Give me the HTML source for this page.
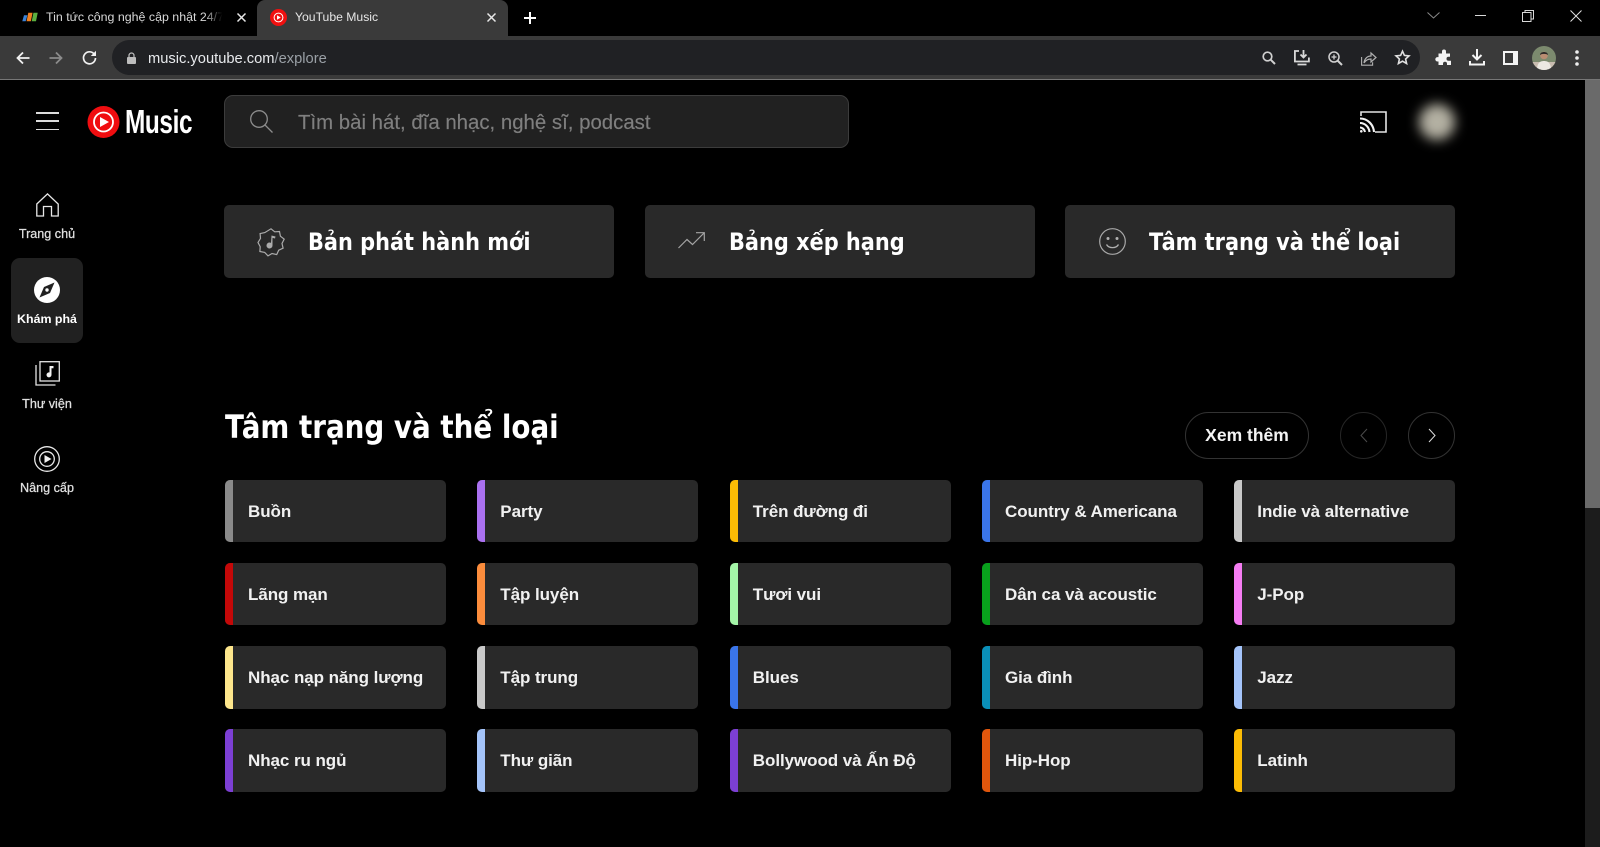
<!DOCTYPE html>
<html lang="vi"><head><meta charset="utf-8"><title>YouTube Music</title>
<style>
*{box-sizing:border-box}
html,body{margin:0;width:1600px;height:847px;overflow:hidden;background:#000;color:#fff;font-family:"Liberation Sans","Noto Sans CJK SC",sans-serif}
.a{position:absolute}
svg{position:absolute;overflow:visible}
.t{position:absolute;white-space:nowrap;line-height:1}
.card{position:absolute;top:205px;width:389.5px;height:73px;background:#292929;border-radius:5px}
.card .t{top:25px;font-family:"DejaVu Sans",sans-serif;font-weight:700;font-size:24px;color:#fff;transform:scaleX(.87);transform-origin:0 50%}
.g{position:absolute;width:221px;height:62.5px;background:#292929;border-radius:5px;overflow:hidden}
.g i{position:absolute;left:0;top:0;bottom:0;width:8px}
.g span{position:absolute;left:23px;top:23px;line-height:18px;font-size:17px;letter-spacing:-.07px;font-weight:700;color:#f1f1f1;white-space:nowrap}
.nav{position:absolute;left:0;width:94px;text-align:center;font-size:12.6px;line-height:14px;color:#e0e0e0;font-weight:400;-webkit-text-stroke:.25px #e0e0e0}
</style></head><body>
<!-- tab strip -->
<div class="a" style="left:0;top:0;width:1600px;height:36px;background:#000"></div>
<div class="a" style="left:257px;top:0;width:251px;height:36px;background:#3a3a3a;border-radius:8px 8px 0 0"></div>
<svg style="left:21px;top:11px" width="18" height="12" viewBox="0 0 20 14"><path d="M3 5h4l-2 7H1z" fill="#3b82d6"/><path d="M8 2h5l-2 10H6z" fill="#f08020"/><path d="M14 2h5l-2 10h-5z" fill="#5cb040"/></svg>
<div class="t" style="left:46px;top:10px;font-size:12.4px;line-height:15px;color:#d8d8d8;width:180px;overflow:hidden;-webkit-mask-image:linear-gradient(90deg,#000 88%,transparent 98%)">Tin tức công nghệ cập nhật 24/7</div>
<svg style="left:237px;top:13px" width="9" height="9"><path d="M.5.5l8 8M8.500.5l-8 8" stroke="#e8e8e8" stroke-width="1.500"/></svg>
<svg style="left:270px;top:9px" width="17" height="17" viewBox="0 0 17 17"><circle cx="8.500" cy="8.500" r="8.500" fill="#f01010"/><circle cx="8.500" cy="8.500" r="4.400" fill="none" stroke="#fff" stroke-width="1"/><path d="M7 6.200l3.800 2.300L7 10.800z" fill="#fff"/></svg>
<div class="t" style="left:295px;top:10px;font-size:12.200px;line-height:15px;color:#e6e6e6">YouTube Music</div>
<svg style="left:487px;top:13px" width="9" height="9"><path d="M.5.5l8 8M8.500.5l-8 8" stroke="#e8e8e8" stroke-width="1.500"/></svg>
<svg style="left:524px;top:12px" width="12" height="12"><path d="M6 0v12M0 6h12" stroke="#fff" stroke-width="2"/></svg>
<svg style="left:1427px;top:12px" width="13" height="7"><path d="M.5.500l6 5.500 6-5.500" fill="none" stroke="#8a8a8a" stroke-width="1"/></svg>
<div class="a" style="left:1475px;top:15px;width:11px;height:1px;background:#d8d8d8"></div>
<svg style="left:1522px;top:10px" width="12" height="12"><path d="M.5 2.500h8.500v9H.5zM3 2.500V.5h8.500v8.500H9" fill="none" stroke="#d8d8d8" stroke-width="1"/></svg>
<svg style="left:1570px;top:10px" width="12" height="12"><path d="M.5.5l11 11M11.500.5l-11 11" stroke="#e0e0e0" stroke-width="1"/></svg>
<!-- toolbar -->
<div class="a" style="left:0;top:36px;width:1600px;height:43px;background:#3a3a3a"></div>
<div class="a" style="left:0;top:79px;width:1600px;height:1px;background:#777"></div>
<div class="a" style="left:112px;top:40px;width:1308px;height:35px;background:#202124;border-radius:18px"></div>
<svg style="left:16px;top:51px" width="14" height="14"><path d="M13.500 7H1.500M7 1.500L1.500 7 7 12.500" fill="none" stroke="#f1f1f1" stroke-width="1.800"/></svg>
<svg style="left:49px;top:51px" width="14" height="14"><path d="M.5 7h12M7 1.500L12.500 7 7 12.500" fill="none" stroke="#8b8b8b" stroke-width="1.800"/></svg>
<svg style="left:82px;top:50px" width="15" height="15" viewBox="0 0 15 15"><path d="M12.500 4.500A6 6 0 1 0 13.500 8" fill="none" stroke="#f1f1f1" stroke-width="1.700"/><path d="M14 .8v5.200H8.800z" fill="#f1f1f1"/></svg>
<svg style="left:127px;top:52px" width="9" height="12"><path d="M2 5V3.500a2.500 2.500 0 0 1 5 0V5" fill="none" stroke="#bdbdbd" stroke-width="1.200"/><rect x="0" y="5" width="9" height="7" rx="1" fill="#bdbdbd"/></svg>
<div class="t" style="left:148px;top:51px;font-size:14.700px;line-height:17px;color:#e8eaed">music.youtube.com<span style="color:#9aa0a6">/explore</span></div>
<svg style="left:1262px;top:51px" width="14" height="14"><circle cx="5.500" cy="5.500" r="4.300" fill="none" stroke="#d0d0d0" stroke-width="1.700"/><path d="M8.800 8.800L13 13" stroke="#d0d0d0" stroke-width="2"/></svg>
<svg style="left:1294px;top:50px" width="16" height="16"><path d="M5 1H.9v10.500h14V7.500M3.500 14.500h9" fill="none" stroke="#d8d8d8" stroke-width="1.800"/><path d="M9.500 0v7M6.500 4.500l3 3 3-3" fill="none" stroke="#d8d8d8" stroke-width="1.800"/></svg>
<svg style="left:1328px;top:51px" width="15" height="15"><circle cx="6" cy="6" r="5" fill="none" stroke="#d0d0d0" stroke-width="1.500"/><path d="M9.500 9.500L14 14" stroke="#d0d0d0" stroke-width="2"/><path d="M3.500 6h5M6 3.500v5" stroke="#d0d0d0" stroke-width="1.300"/></svg>
<svg style="left:1361px;top:50px" width="16" height="16"><path d="M.6 7v8.200h11v-3" fill="none" stroke="#b0b0b0" stroke-width="1.100"/><path d="M3 13C3.500 8.500 6.500 6 10 6V3l5 4.500L10 12V9c-3 0-5.500 1.500-7 4z" fill="none" stroke="#b0b0b0" stroke-width="1.200"/></svg>
<svg style="left:1395px;top:50px" width="15" height="15"><path d="M7.500 1.200l1.900 4.200 4.600.5-3.400 3.100 1 4.500-4.100-2.300-4.100 2.300 1-4.500L1 5.900l4.600-.5z" fill="none" stroke="#e0e0e0" stroke-width="1.600"/></svg>
<svg style="left:1436px;top:50px" width="16" height="16"><path d="M6 1.500a2 2 0 0 1 4 0V3.500h4v3.300h-1.500a2 2 0 0 0 0 4H15V15h-4v-1.200a2 2 0 0 0-4 0V15H2.500v-3.500H1.500a2.200 2.200 0 0 1 0-4.400H2.500V3.500H6z" fill="#f4f4f4"/></svg>
<svg style="left:1469px;top:49px" width="16" height="17"><path d="M8 0v10M3.500 6L8 10.500 12.500 6" fill="none" stroke="#f4f4f4" stroke-width="2"/><path d="M1 12v3.500h14V12" fill="none" stroke="#f4f4f4" stroke-width="2"/></svg>
<svg style="left:1503px;top:51px" width="15" height="14"><rect x="1" y="1" width="13" height="12" fill="none" stroke="#f4f4f4" stroke-width="2"/><rect x="10" y="1" width="4" height="12" fill="#f4f4f4"/></svg>
<svg style="left:1532px;top:46px" width="24" height="24" viewBox="0 0 24 24"><defs><clipPath id="c"><circle cx="12" cy="12" r="12"/></clipPath></defs><circle cx="12" cy="12" r="12" fill="#7c8a6e"/><g clip-path="url(#c)"><rect x="0" y="16" width="24" height="8" fill="#c9bcb0"/><path d="M5 24c0-7 3-9 7-9s7 2 7 9z" fill="#ece8e2"/><circle cx="12" cy="9.500" r="3.800" fill="#b98d72"/><path d="M8 9c0-4 8-4 8 0-2-1.500-6-1.500-8 0z" fill="#2c2a28"/></g></svg>
<svg style="left:1575px;top:50px" width="4" height="16"><circle cx="2" cy="2" r="1.800" fill="#eee"/><circle cx="2" cy="8" r="1.800" fill="#eee"/><circle cx="2" cy="14" r="1.800" fill="#eee"/></svg>
<!-- scrollbar -->
<div class="a" style="left:1585px;top:80px;width:15px;height:767px;background:#1c1c1c"></div>
<div class="a" style="left:1585px;top:80px;width:15px;height:428px;background:#6a6a6a"></div>
<!-- header -->
<div class="a" style="left:36px;top:112px;width:23px;height:1.500px;background:#dcdcdc"></div>
<div class="a" style="left:36px;top:120px;width:23px;height:1.500px;background:#dcdcdc"></div>
<div class="a" style="left:36px;top:128.500px;width:23px;height:1.500px;background:#dcdcdc"></div>
<svg style="left:87px;top:106px" width="33" height="32" viewBox="0 0 33 32"><circle cx="16.500" cy="16" r="16" fill="#f00d10"/><circle cx="16.500" cy="16" r="9.500" fill="none" stroke="#fff" stroke-width="1.800"/><path d="M13 11l9 5-9 5z" fill="#fff"/></svg>
<div class="t" style="left:125px;top:106px;font-size:33.500px;line-height:33px;font-weight:700;color:#fff;transform:scaleX(.727);transform-origin:0 0;letter-spacing:-.5px">Music</div>
<div class="a" style="left:224px;top:95px;width:625px;height:53px;background:#212121;border:1px solid #3c3c3c;border-radius:9px"></div>
<svg style="left:249px;top:109px" width="25" height="25"><circle cx="10" cy="10" r="8.300" fill="none" stroke="#8d8d8d" stroke-width="1.300"/><path d="M16 16l7.500 7.500" stroke="#8d8d8d" stroke-width="1.300"/></svg>
<div class="t" style="left:298px;top:112px;font-size:20.400px;line-height:23px;color:#7f7f7f;-webkit-text-stroke:.15px #7f7f7f">Tìm bài hát, đĩa nhạc, nghệ sĩ, podcast</div>
<svg style="left:1360px;top:111px" width="27" height="22"><path d="M1 5V1h25v20H15" fill="none" stroke="#e4e4e4" stroke-width="1.600"/><path d="M0 7.500c7.500 0 13.500 6 14 13.500M0 12c5 0 9 4 9.500 9M0 16.500c2.500 0 4.500 2 5 4.500" fill="none" stroke="#f2f2f2" stroke-width="2.100"/><circle cx="1.300" cy="20.300" r="1.300" fill="#f2f2f2"/></svg>
<div class="a" style="left:1419px;top:104px;width:36px;height:36px;border-radius:50%;background:#b3b0a2;filter:blur(6px)"></div>
<!-- nav -->
<div class="a" style="left:11px;top:258px;width:72px;height:85px;background:#212121;border-radius:9px"></div>
<svg style="left:36px;top:193px" width="23" height="24" viewBox="0 0 23 24"><path d="M.8 11L11.500.9 22.200 11v12H15.500v-9.500h-8V23H.8z" fill="none" stroke="#e8e8e8" stroke-width="1.300"/></svg>
<div class="nav" style="top:227px">Trang chủ</div>
<svg style="left:34px;top:277px" width="26" height="26" viewBox="0 0 26 26"><circle cx="13" cy="13" r="13" fill="#fff"/><path d="M20.500 5.500L16 16 5.500 20.500 10 10z" fill="#212121"/><circle cx="13" cy="13" r="1.700" fill="#fff"/></svg>
<div class="nav" style="top:312px;color:#fff;font-weight:700;-webkit-text-stroke:0;font-size:12.400px">Khám phá</div>
<svg style="left:35px;top:361px" width="25" height="25" viewBox="0 0 25 25"><path d="M1 4v20h19.500" fill="none" stroke="#e4e4e4" stroke-width="1.300"/><rect x="5" y=".7" width="19.300" height="19.300" fill="none" stroke="#e4e4e4" stroke-width="1.300"/><path d="M14.500 5h4v2.300h-2v6.500a2.500 2.500 0 1 1-2-2.400z" fill="#f4f4f4"/></svg>
<div class="nav" style="top:397px">Thư viện</div>
<svg style="left:34px;top:446px" width="26" height="26" viewBox="0 0 26 26"><circle cx="13" cy="13" r="12.300" fill="none" stroke="#e8e8e8" stroke-width="1.300"/><circle cx="13" cy="13" r="7.300" fill="none" stroke="#e8e8e8" stroke-width="1.300"/><path d="M10.500 9l7 4-7 4z" fill="#f0f0f0"/></svg>
<div class="nav" style="top:481px">Nâng cấp</div>
<!-- top cards -->
<div class="card" style="left:224px">
<svg style="left:33px;top:23px" width="28" height="28" viewBox="0 0 28 28"><path d="M14 .8l3.700 3 4.800-.3.900 4.700 3.800 3-2.200 4.300 1.100 4.700-4.400 2-2 4.400-4.700-1.100-4 2.400-3.300-3.500-4.800-.9.300-4.800L1 14.500l2.500-4.100-.4-4.800 4.700-1z" fill="none" stroke="#ababab" stroke-width="1.200"/><path d="M14.500 7.500l4 1-.5 2-2.500-.6v7.600a3 3 0 1 1-1.500-2.600z" fill="#ababab"/></svg>
<div class="t" style="left:84px">Bản phát hành mới</div></div>
<div class="card" style="left:645px">
<svg style="left:33px;top:27px" width="27" height="17" viewBox="0 0 27 17"><path d="M.5 16L9 7.500l5.500 5L26 1M18 .7h8.300V9" fill="none" stroke="#a3a3a3" stroke-width="1.200"/></svg>
<div class="t" style="left:84px">Bảng xếp hạng</div></div>
<div class="card" style="left:1065px">
<svg style="left:34px;top:23px" width="27" height="27" viewBox="0 0 27 27"><circle cx="13.500" cy="13.500" r="12.800" fill="none" stroke="#a8a8a8" stroke-width="1.200"/><circle cx="9" cy="10.500" r="1.500" fill="#b0b0b0"/><circle cx="18" cy="10.500" r="1.500" fill="#b0b0b0"/><path d="M7.500 16.500c2.500 4.200 9.500 4.200 12 0" fill="none" stroke="#b0b0b0" stroke-width="1.300"/></svg>
<div class="t" style="left:84px">Tâm trạng và thể loại</div></div>
<!-- section header -->
<div class="t" style="left:225px;top:408px;font-family:'DejaVu Sans',sans-serif;font-weight:700;font-size:32px;line-height:38px;color:#fff;transform:scaleX(.867);transform-origin:0 50%">Tâm trạng và thể loại</div>
<div class="a" style="left:1185px;top:412px;width:124px;height:47px;border:1px solid #333;border-radius:24px"></div>
<div class="t" style="left:1185px;width:124px;text-align:center;top:425px;font-size:17.500px;line-height:20px;font-weight:700;color:#f4f4f4">Xem thêm</div>
<div class="a" style="left:1340px;top:412px;width:47px;height:47px;border:1px solid #262626;border-radius:50%"></div>
<svg style="left:1360px;top:428px" width="8" height="15"><path d="M7 1L1 7.500 7 14" fill="none" stroke="#4b4b4b" stroke-width="1"/></svg>
<div class="a" style="left:1408px;top:412px;width:47px;height:47px;border:1px solid #333;border-radius:50%"></div>
<svg style="left:1428px;top:428px" width="8" height="15"><path d="M1 1l6 6.500L1 14" fill="none" stroke="#dcdcdc" stroke-width="1"/></svg>
<!-- grid -->
<div class="g" style="left:225px;top:479.500px"><i style="background:#8a8a8a"></i><span>Buồn</span></div>
<div class="g" style="left:477.300px;top:479.500px"><i style="background:#aa71f0"></i><span>Party</span></div>
<div class="g" style="left:729.800px;top:479.500px"><i style="background:#fcbc05"></i><span>Trên đường đi</span></div>
<div class="g" style="left:982px;top:479.500px"><i style="background:#3a75ea"></i><span>Country &amp; Americana</span></div>
<div class="g" style="left:1234.300px;top:479.500px"><i style="background:#c9c9c9"></i><span>Indie và alternative</span></div>
<div class="g" style="left:225px;top:562.800px"><i style="background:#c40808"></i><span>Lãng mạn</span></div>
<div class="g" style="left:477.300px;top:562.800px"><i style="background:#fb8c3c"></i><span>Tập luyện</span></div>
<div class="g" style="left:729.800px;top:562.800px"><i style="background:#a4f5a8"></i><span>Tươi vui</span></div>
<div class="g" style="left:982px;top:562.800px"><i style="background:#08a01c"></i><span>Dân ca và acoustic</span></div>
<div class="g" style="left:1234.300px;top:562.800px"><i style="background:#f57cf2"></i><span>J-Pop</span></div>
<div class="g" style="left:225px;top:646px"><i style="background:#fde68c"></i><span>Nhạc nạp năng lượng</span></div>
<div class="g" style="left:477.300px;top:646px"><i style="background:#c9c9c9"></i><span>Tập trung</span></div>
<div class="g" style="left:729.800px;top:646px"><i style="background:#3a75ea"></i><span>Blues</span></div>
<div class="g" style="left:982px;top:646px"><i style="background:#0a8fb8"></i><span>Gia đình</span></div>
<div class="g" style="left:1234.300px;top:646px"><i style="background:#a4c4fa"></i><span>Jazz</span></div>
<div class="g" style="left:225px;top:729.300px"><i style="background:#7c3fd4"></i><span>Nhạc ru ngủ</span></div>
<div class="g" style="left:477.300px;top:729.300px"><i style="background:#a4c4fa"></i><span>Thư giãn</span></div>
<div class="g" style="left:729.800px;top:729.300px"><i style="background:#7c3fd4"></i><span>Bollywood và Ấn Độ</span></div>
<div class="g" style="left:982px;top:729.300px"><i style="background:#e0560c"></i><span>Hip-Hop</span></div>
<div class="g" style="left:1234.300px;top:729.300px"><i style="background:#fcbc05"></i><span>Latinh</span></div>
</body></html>
